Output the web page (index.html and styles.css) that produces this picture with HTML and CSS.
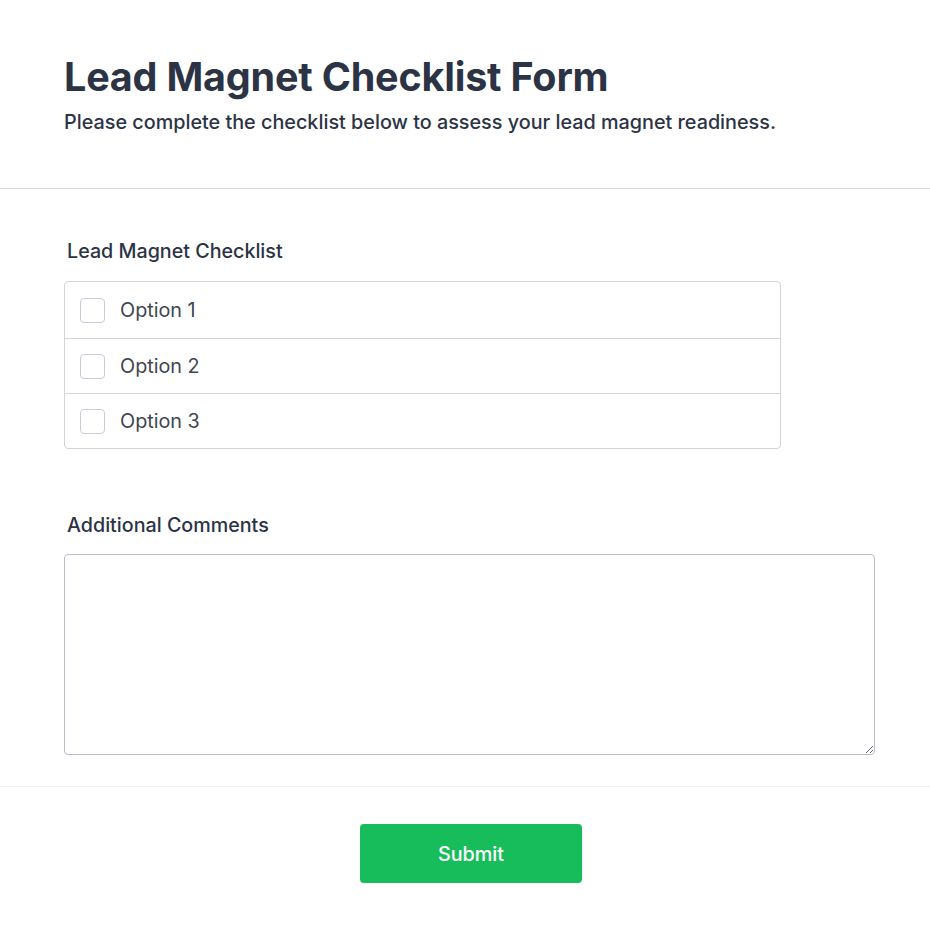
FILE: index.html
```html
<!DOCTYPE html>
<html lang="en">
<head>
<meta charset="utf-8">
<title>Lead Magnet Checklist Form</title>
<link rel="stylesheet" href="styles.css">
</head>
<body>
<form class="form">
  <header class="form-header">
    <h1 class="form-title">Lead Magnet Checklist Form</h1>
    <p class="form-subtitle">Please complete the checklist below to assess your lead magnet readiness.</p>
  </header>
  <section class="form-body">
    <div class="field">
      <div class="field-label">Lead Magnet Checklist</div>
      <div class="check-group">
        <label class="check-row"><span class="check-box"></span><span class="check-text">Option 1</span></label>
        <label class="check-row"><span class="check-box"></span><span class="check-text">Option 2</span></label>
        <label class="check-row"><span class="check-box"></span><span class="check-text">Option 3</span></label>
      </div>
    </div>
    <div class="field field-comments">
      <div class="field-label">Additional Comments</div>
      <textarea class="comments"></textarea>
    </div>
  </section>
  <footer class="form-footer">
    <button type="button" class="submit">Submit</button>
  </footer>
</form>
</body>
</html>
```
FILE: styles.css
```css
* { box-sizing: border-box; }
html, body { margin: 0; padding: 0; background: #fff; }
body {
  font-family: Inter, "Noto Sans", sans-serif;
  color: #2c3345;
}
.form-header {
  padding: 52px 64px 52px;
  border-bottom: 1px solid #d8dbe0;
}
.form-title {
  margin: 0;
  font-size: 39.5px;
  font-weight: 700;
  line-height: 50px;
  color: #2c3345;
  letter-spacing: -0.2px;
}
.form-subtitle {
  margin: 6px 0 0;
  font-size: 19.8px;
  font-weight: 500;
  line-height: 28px;
  color: #2c3345;
}
.form-body {
  padding: 49px 55px 31px 64px;
  border-bottom: 1px solid #eceef2;
}
.field-label {
  font-size: 19.7px;
  font-weight: 500;
  line-height: 26px;
  padding-left: 3px;
  margin-bottom: 17px;
  color: #2c3345;
}
.check-group {
  width: 717px;
  border: 1px solid #d3d5d9;
  border-radius: 4px;
}
.check-row {
  display: flex;
  align-items: center;
  height: 55px;
  padding-left: 15px;
  border-top: 1px solid #d3d5d9;
}
.check-row:first-child { border-top: none; height: 56px; }
.check-box {
  width: 25px;
  height: 25px;
  border: 1px solid #c8ccd6;
  border-radius: 4px;
  background: #fff;
}
.check-text {
  margin-left: 15px;
  font-size: 19.8px;
  color: #414552;
}
.field-comments { margin-top: 63px; }
.field-comments .field-label { margin-bottom: 16px; }
.comments {
  display: block;
  width: 811px;
  height: 201px;
  border: 1px solid #b9bdca;
  border-radius: 4px;
  font-family: inherit;
  resize: vertical;
}
.form-footer {
  display: flex;
  justify-content: center;
  padding: 37px 0 40px 12px;
}
.submit {
  width: 222px;
  height: 59px;
  border: none;
  border-radius: 4px;
  background: #18bd5b;
  color: #fff;
  font-family: inherit;
  font-size: 19.8px;
  font-weight: 500;
}
```
